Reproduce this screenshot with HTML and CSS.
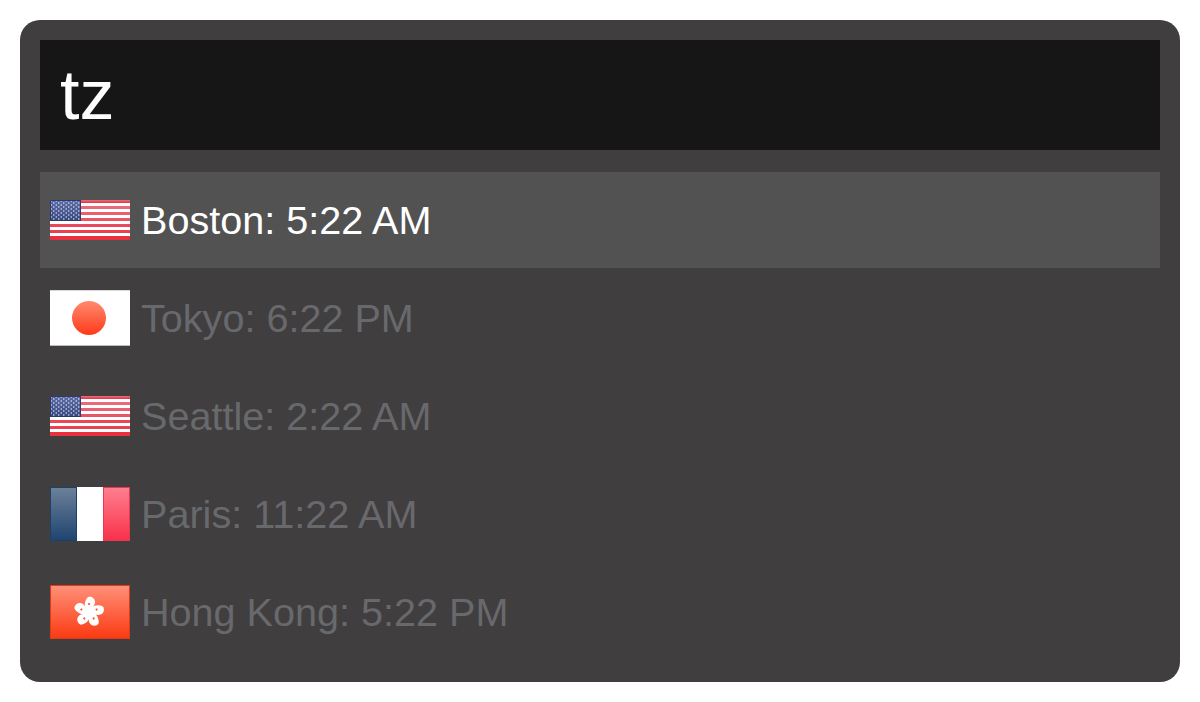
FILE: index.html
```html
<!DOCTYPE html>
<html lang="en">
<head>
<meta charset="utf-8">
<title>tz</title>
<link rel="stylesheet" href="styles.css">
</head>
<body>
<svg class="defs" width="0" height="0" aria-hidden="true">
  <defs>
    <linearGradient id="usRed" x1="0" y1="0" x2="0" y2="1"><stop offset="0" stop-color="#e8707f"/><stop offset="1" stop-color="#e8303f"/></linearGradient>
    <linearGradient id="usBlue" x1="0" y1="0" x2="0" y2="1"><stop offset="0" stop-color="#5d6da5"/><stop offset="1" stop-color="#36477f"/></linearGradient>
    <linearGradient id="jpRed" x1="0" y1="0" x2="0" y2="1"><stop offset="0" stop-color="#ff8a70"/><stop offset="1" stop-color="#ff3a18"/></linearGradient>
    <linearGradient id="frBlue" x1="0" y1="0" x2="0" y2="1"><stop offset="0" stop-color="#6d8199"/><stop offset="1" stop-color="#1e4470"/></linearGradient>
    <linearGradient id="frRed" x1="0" y1="0" x2="0" y2="1"><stop offset="0" stop-color="#ff8090"/><stop offset="1" stop-color="#f9304a"/></linearGradient>
    <linearGradient id="hkRed" x1="0" y1="0" x2="0" y2="1"><stop offset="0" stop-color="#ff9078"/><stop offset="1" stop-color="#fb3a12"/></linearGradient>
    <pattern id="stars" width="5" height="4" patternUnits="userSpaceOnUse">
      <circle cx="1.25" cy="1" r=".75" fill="#e4e7f2"/>
      <circle cx="3.75" cy="3" r=".75" fill="#e4e7f2"/>
    </pattern>
    <symbol id="flag-us" viewBox="0 0 80 40">
      <rect width="80" height="40" fill="#fff"/>
      <rect y="0" width="80" height="3" fill="url(#usRed)"/>
      <rect y="6" width="80" height="3" fill="#ea6a78"/>
      <rect y="12" width="80" height="3" fill="#ea6070"/>
      <rect y="18" width="80" height="3" fill="#ea5565"/>
      <rect y="24" width="80" height="3" fill="#ea4858"/>
      <rect y="30" width="80" height="3" fill="#ea4050"/>
      <rect y="36" width="80" height="4" fill="#e8303f"/>
      <rect width="31" height="21" fill="url(#usBlue)"/>
      <rect x=".5" y=".5" width="30" height="20" fill="url(#stars)" stroke="#2c3a70"/>
    </symbol>
  </defs>
</svg>
<main class="window">
  <div class="search">tz</div>
  <ul class="results">
    <li class="row selected">
      <svg class="flag flag-us" viewBox="0 0 80 40"><use href="#flag-us"/></svg>
      <span>Boston: 5:22 AM</span>
    </li>
    <li class="row">
      <svg class="flag flag-jp" viewBox="0 0 80 56">
        <rect width="80" height="56" fill="#fff"/>
        <rect y="55" width="80" height="1" fill="#bdbdbd"/>
        <rect width="80" height="1" fill="#d8d8d8"/>
        <circle cx="39" cy="28" r="17" fill="url(#jpRed)"/>
      </svg>
      <span>Tokyo: 6:22 PM</span>
    </li>
    <li class="row">
      <svg class="flag flag-us" viewBox="0 0 80 40"><use href="#flag-us"/></svg>
      <span>Seattle: 2:22 AM</span>
    </li>
    <li class="row">
      <svg class="flag flag-fr" viewBox="0 0 80 54">
        <rect width="27" height="54" fill="url(#frBlue)"/>
        <rect x="26" width="28" height="54" fill="#fff"/>
        <rect x="54" width="26" height="54" fill="url(#frRed)"/>
        <rect x=".5" y=".5" width="26" height="53" fill="none" stroke="#1d3f6b"/>
        <rect x="53.5" y=".5" width="26" height="53" fill="none" stroke="#e8384e"/>
      </svg>
      <span>Paris: 11:22 AM</span>
    </li>
    <li class="row">
      <svg class="flag flag-hk" viewBox="0 0 80 54">
        <rect x=".5" y=".5" width="79" height="53" fill="url(#hkRed)" stroke="#e03a18"/>
        <g transform="translate(39 27)" fill="#fff">
          <g id="petal">
            <path d="M0 1C-5-2-6-10-1-15C2-16 6-14 6-10C6-6 2-4 1-1Z"/>
            <circle cx="0" cy="-8" r="1.1" fill="#f4553a"/>
          </g>
          <use href="#petal" transform="rotate(72)"/>
          <use href="#petal" transform="rotate(144)"/>
          <use href="#petal" transform="rotate(216)"/>
          <use href="#petal" transform="rotate(288)"/>
        </g>
      </svg>
      <span>Hong Kong: 5:22 PM</span>
    </li>
  </ul>
</main>
</body>
</html>
```
FILE: styles.css
```css
* { box-sizing: border-box; }
html, body { margin: 0; height: 100%; background: #fff; }
body {
  padding: 20px;
  font-family: "Liberation Sans", Arial, sans-serif;
}
.defs { position: absolute; }
.window {
  height: 662px;
  background: #403e3f;
  border-radius: 20px;
  padding: 20px;
}
.search {
  height: 110px;
  background: #161616;
  color: #fff;
  font-size: 70px;
  line-height: 110px;
  padding-left: 20px;
}
.results {
  list-style: none;
  margin: 22px 0 0;
  padding: 0;
  display: flex;
  flex-direction: column;
  gap: 2px;
}
.row {
  height: 96px;
  display: flex;
  align-items: center;
  gap: 11px;
  padding-left: 10px;
  color: #68696c;
  font-size: 39.6px;
}
.row.selected {
  background: #525252;
  color: #fff;
}
.flag { width: 80px; flex: none; display: block; }
.flag-us { height: 40px; }
.flag-jp { height: 56px; }
.flag-fr, .flag-hk { height: 54px; }
```
